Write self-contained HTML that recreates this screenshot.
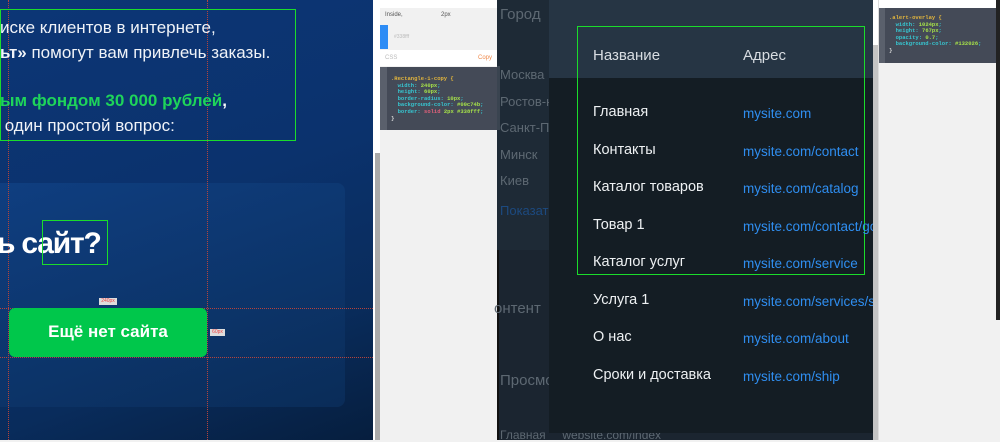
<!DOCTYPE html>
<html><head><meta charset="utf-8"><style>
*{margin:0;padding:0;box-sizing:border-box}
body{width:1000px;height:440px;overflow:hidden;position:relative;font-family:"Liberation Sans","DejaVu Sans",sans-serif;background:#f1f1f1}
.a{position:absolute}
.code{font-family:"Liberation Mono",monospace;font-size:5.5px;line-height:6.6px;font-weight:bold}
</style></head><body>
<!-- left blue -->
<div class="a" style="left:0;top:0;width:373px;height:440px;background:linear-gradient(160deg,#0c3676 0%,#0b326d 45%,#092c5c 75%,#061e3e 100%)"></div>
<div class="a" style="left:0;top:183px;width:345px;height:224px;border-radius:0 8px 8px 0;background:linear-gradient(160deg,#0f3e80,#0c3469 60%,#0a2c58)"></div>
<div class="a" style="left:8px;top:0;width:0;height:440px;border-left:1px dotted #b5433d"></div>
<div class="a" style="left:207px;top:0;width:0;height:440px;border-left:1px dotted #b5433d"></div>
<div class="a" style="left:0;top:308px;width:373px;border-top:1px dotted #b5433d"></div>
<div class="a" style="left:0;top:357px;width:373px;border-top:1px dotted #b5433d"></div>
<div class="a" style="left:0;top:9px;width:296px;height:132px;border:1px solid #1bdc2b"></div>
<div class="a" style="left:0;top:15px;color:#f0f3f8;font-size:17px;line-height:25px;white-space:nowrap">
<div>иске клиентов в интернете,</div>
<div><b>ьт»</b> помогут вам привлечь заказы.</div>
<div style="height:23px"></div>
<div style="color:#1ed45a;font-weight:bold">ым фондом 30 000 рублей<span style="color:#fff">,</span></div>
<div>&nbsp;один простой вопрос:</div>
</div>
<div class="a" style="left:-3px;top:227px;color:#fff;font-size:30px;font-weight:bold;white-space:nowrap;letter-spacing:-1.2px">ь сайт?</div>
<div class="a" style="left:42px;top:220px;width:66px;height:45px;border:1px solid #1bdc2b"></div>
<div class="a" style="left:9px;top:308px;width:198px;height:49px;background:#00c74b;border-radius:6px;color:#fff;font-size:17px;font-weight:bold;text-align:center;line-height:47px">Ещё нет сайта</div>
<div class="a" style="left:99px;top:298px;width:18px;height:7px;background:#ddd;color:#e44;font-size:5px;line-height:7px;text-align:center">240px</div>
<div class="a" style="left:210px;top:329px;width:15px;height:7px;background:#ddd;color:#e44;font-size:5px;line-height:7px;text-align:center">60px</div>
<!-- middle scrollbar + panel -->
<div class="a" style="left:373px;top:0;width:7px;height:440px;background:#fff"></div>
<div class="a" style="left:375px;top:153px;width:5px;height:287px;background:#a9a9a9"></div>
<div class="a" style="left:380px;top:0;width:117px;height:440px;background:#f1f1f1"></div>
<div class="a" style="left:380px;top:0;width:117px;height:8px;background:#fff"></div>
<div class="a" style="left:385px;top:12px;font-size:6px;color:#555">Inside,</div>
<div class="a" style="left:441px;top:12px;font-size:6px;color:#555">2px</div>
<div class="a" style="left:380px;top:25px;width:8px;height:24px;background:#2d8cf5"></div>
<div class="a" style="left:394px;top:34px;font-size:5px;color:#bbb">#338fff</div>
<div class="a" style="left:380px;top:50px;width:117px;height:16px;background:#fff"></div>
<div class="a" style="left:385px;top:55px;font-size:6px;color:#bbb">CSS</div>
<div class="a" style="left:478px;top:55px;font-size:6px;color:#f08a4b">Copy</div>
<div class="a" style="left:380px;top:67px;width:117px;height:63px;background:#444a57;border-left:7px solid #5a606c"></div>
<div class="a code" style="left:391px;top:76px;color:#37c5d0;white-space:pre"><span style="color:#e2b53d">.Rectangle-1-copy {</span>
  width: <span style="color:#a5e04a">240px</span>;
  height: <span style="color:#a5e04a">60px</span>;
  border-radius: <span style="color:#a5e04a">10px</span>;
  background-color: <span style="color:#a5e04a">#00c74b</span>;
  border: <span style="color:#e0607a">solid</span> <span style="color:#a5e04a">2px #338fff</span>;
<span style="color:#ddd">}</span></div>
<!-- dark app -->
<div class="a" style="left:497px;top:0;width:376px;height:440px;background:#1b2530;border-left:2px solid #111"></div>
<div class="a" style="left:497px;top:0;width:52px;height:250px;background:#1e2a36"></div>
<div class="a" style="left:497px;top:66px;width:3px;height:64px;background:#3a4450"></div>
<div class="a" style="left:500px;top:6px;color:#5d6872;font-size:15px">Город</div>
<div class="a" style="left:500px;top:62px;color:#5d6872;font-size:13px;line-height:26.5px">Москва<br>Ростов-н<br>Санкт-П<br>Минск<br>Киев</div>
<div class="a" style="left:500px;top:203px;color:#1c4a80;font-size:13px">Показат</div>
<div class="a" style="left:494px;top:300px;color:#5d6872;font-size:15px">онтент</div>
<div class="a" style="left:500px;top:372px;color:#5d6872;font-size:15px">Просмо</div>
<div class="a" style="left:500px;top:428px;color:#5d6872;font-size:12px;white-space:nowrap">Главная &nbsp;&nbsp;&nbsp;&nbsp;website.com/index</div>
<!-- modal -->
<div class="a" style="left:549px;top:0;width:324px;height:433px;background:#141d24"></div>
<div class="a" style="left:549px;top:0;width:324px;height:78px;background:#263544"></div>
<div class="a" style="left:577px;top:26px;width:288px;height:249px;border:1px solid #1bdc2b"></div>
<div class="a" style="left:593px;top:47px;color:#d8dde2;font-size:15px">Название</div>
<div class="a" style="left:743px;top:47px;color:#d8dde2;font-size:15px">Адрес</div>
<div class="a" style="left:593px;top:94px;color:#eef1f3;font-size:14.5px;line-height:37.5px;white-space:nowrap">Главная<br>Контакты<br>Каталог товаров<br>Товар 1<br>Каталог услуг<br>Услуга 1<br>О нас<br>Сроки и доставка</div>
<div class="a" style="left:743px;top:95px;width:130px;overflow:hidden;color:#2f8ef0;font-size:13.5px;line-height:37.5px;white-space:nowrap">mysite.com<br>mysite.com/contact<br>mysite.com/catalog<br>mysite.com/contact/goods<br>mysite.com/service<br>mysite.com/services/service<br>mysite.com/about<br>mysite.com/ship</div>
<!-- right scrollbar + panel -->
<div class="a" style="left:873px;top:0;width:5px;height:440px;background:#c4c4c4"></div>
<div class="a" style="left:873px;top:0;width:5px;height:45px;background:#fff"></div>
<div class="a" style="left:878px;top:0;width:122px;height:440px;background:#f1f1f1;border-left:1px solid #ddd"></div>
<div class="a" style="left:879px;top:0;width:117px;height:8px;background:#fff"></div>
<div class="a" style="left:879px;top:8px;width:117px;height:55px;background:#444a57;border-left:6px solid #5a606c"></div>
<div class="a code" style="left:889px;top:15px;color:#37c5d0;white-space:pre"><span style="color:#e2b53d">.alert-overlay {</span>
  width: <span style="color:#a5e04a">1024px</span>;
  height: <span style="color:#a5e04a">767px</span>;
  opacity: <span style="color:#a5e04a">0.7</span>;
  background-color: <span style="color:#a5e04a">#132026</span>;
<span style="color:#ddd">}</span></div>
<div class="a" style="left:996px;top:0;width:4px;height:320px;background:#222"></div>
</body></html>
